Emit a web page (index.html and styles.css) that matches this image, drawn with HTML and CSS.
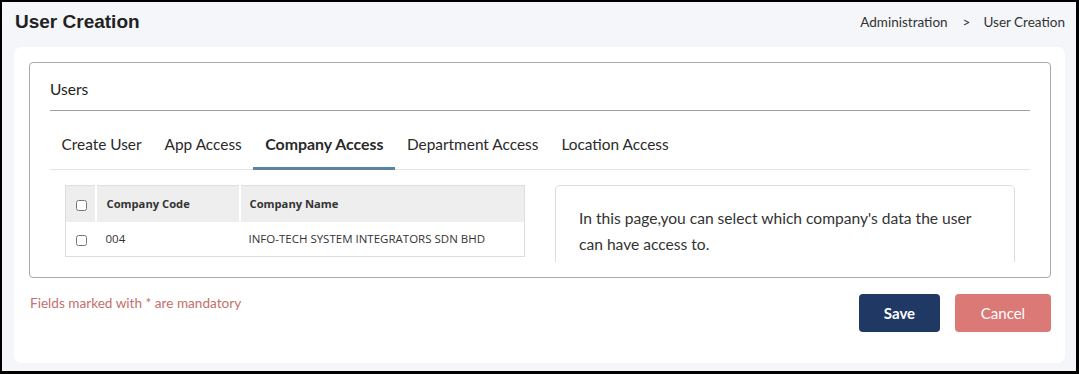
FILE: index.html
```html
<!DOCTYPE html>
<html lang="en">
<head>
    <meta charset="UTF-8">
    <meta name="viewport" content="width=device-width, initial-scale=1.0">
    <title>User Creation</title>
    <link rel="stylesheet" href="styles.css">
</head>
<body>
    <div class="frame">
        <!-- Page Header -->
        <header class="page-head">
            <h1>User Creation</h1>
            <nav class="crumbs">
                <span>Administration</span>
                <span class="sep">&gt;</span>
                <span>User Creation</span>
            </nav>
        </header>

        <!-- Main Card -->
        <main class="card">
            <section class="panel">
                <div class="panel-title">Users</div>

                <ul class="tabs">
                    <li class="tab">Create User</li>
                    <li class="tab">App Access</li>
                    <li class="tab active">Company Access</li>
                    <li class="tab">Department Access</li>
                    <li class="tab">Location Access</li>
                </ul>

                <div class="tab-body">
                    <div class="col">
                        <table class="grid">
                            <thead>
                                <tr>
                                    <th class="chk"><input type="checkbox"></th>
                                    <th class="code">Company Code</th>
                                    <th>Company Name</th>
                                </tr>
                            </thead>
                            <tbody>
                                <tr>
                                    <td class="chk"><input type="checkbox"></td>
                                    <td class="code">004</td>
                                    <td>INFO-TECH SYSTEM INTEGRATORS SDN BHD</td>
                                </tr>
                            </tbody>
                        </table>
                    </div>
                    <div class="col">
                        <div class="note">
                            <p>In this page,you can select which company's data the user can have access to.</p>
                        </div>
                    </div>
                </div>
            </section>

            <!-- Footer -->
            <div class="form-foot">
                <p class="req">Fields marked with * are mandatory</p>
                <div class="actions">
                    <button class="btn btn-save">Save</button>
                    <button class="btn btn-cancel">Cancel</button>
                </div>
            </div>
        </main>
    </div>
</body>
</html>
```

FILE: styles.css
```css
/* Reset */
* {
    box-sizing: border-box;
    margin: 0;
    padding: 0;
}

body {
    font-family: 'Lato', sans-serif;
    color: #333;
    background: #000;
}

/* Outer frame */
.frame {
    height: 374px;
    border: 2px solid #000;
    border-right-width: 3px;
    border-bottom-width: 3px;
    background: #f4f6f9;
    overflow: hidden;
}

/* Header */
.page-head {
    height: 45px;
    display: flex;
    align-items: center;
    justify-content: space-between;
    padding: 0 11px 5px 13px;
}

.page-head h1 {
    font-family: 'Liberation Sans', Arial, sans-serif;
    font-size: 19px;
    font-weight: bold;
    color: #222;
}

.crumbs {
    font-size: 13.5px;
    color: #333;
    display: flex;
}

.crumbs .sep {
    margin: 0 13px 0 15px;
}

/* Card */
.card {
    margin: 0 11px 0 12px;
    height: 316px;
    background: #fff;
    border-radius: 8px;
    padding: 15px 14px 30px 15px;
}

.panel {
    border: 1px solid #aaa;
    border-radius: 4px;
    padding: 0 20px 15px 20px;
}

.panel-title {
    font-size: 15.5px;
    line-height: 22px;
    padding: 15px 0 10px 0;
    border-bottom: 1px solid #9e9e9e;
    color: #222;
}

/* Tabs */
.tabs {
    list-style: none;
    display: flex;
    margin-top: 13px;
    border-bottom: 1px solid #e4e4e4;
}

.tab {
    font-size: 15.4px;
    line-height: 22px;
    padding: 9px 11.5px 12px;
    border-bottom: 3px solid transparent;
    margin-bottom: -1px;
    color: #2a2a2a;
}

.tab.active {
    font-size: 15.9px;
    font-weight: bold;
    border-bottom-color: #5a84a4;
    padding: 9px 12px 12px;
}

/* Tab content */
.tab-body {
    display: grid;
    grid-template-columns: 1fr 1fr;
    height: 92px;
    overflow: hidden;
}

.col {
    padding: 15px;
}

/* Table */
.grid {
    width: 100%;
    border-collapse: collapse;
    border: 1px solid #ddd;
    font-family: 'Open Sans', sans-serif;
    font-size: 11.5px;
    color: #333;
}

.grid th {
    background: #eee;
    text-align: left;
    font-weight: 700;
    font-size: 11.2px;
    height: 36px;
    padding: 0 9px;
    border-left: 2px solid #fff;
}

.grid th:first-child {
    border-left: none;
}

.grid td {
    height: 35px;
    padding: 0 9px;
}

.grid .chk {
    width: 30px;
    padding: 0 0 0 10px;
}

.grid .code {
    width: 144px;
    padding-left: 10px;
}

.grid input[type="checkbox"] {
    width: 11px;
    height: 11px;
    margin: 0;
    vertical-align: middle;
}

/* Info note */
.note {
    border: 1px solid #ddd;
    border-radius: 5px;
    padding: 19px 23px;
    height: 120px;
}

.note p {
    font-size: 15.6px;
    line-height: 26px;
    color: #333;
}

/* Footer */
.form-foot {
    display: flex;
    justify-content: space-between;
    align-items: flex-start;
    margin-top: 16px;
}

.req {
    font-size: 13.6px;
    color: #c4706c;
    padding-left: 1px;
    margin-top: 1px;
}

.actions {
    display: flex;
    gap: 15px;
}

.btn {
    font-family: 'Lato', sans-serif;
    font-size: 15px;
    height: 38px;
    color: #fff;
    border: none;
    border-radius: 4px;
    cursor: pointer;
}

.btn-save {
    width: 81px;
    background: #1f3864;
    font-weight: bold;
}

.btn-cancel {
    width: 96px;
    background: #db7977;
}
```
